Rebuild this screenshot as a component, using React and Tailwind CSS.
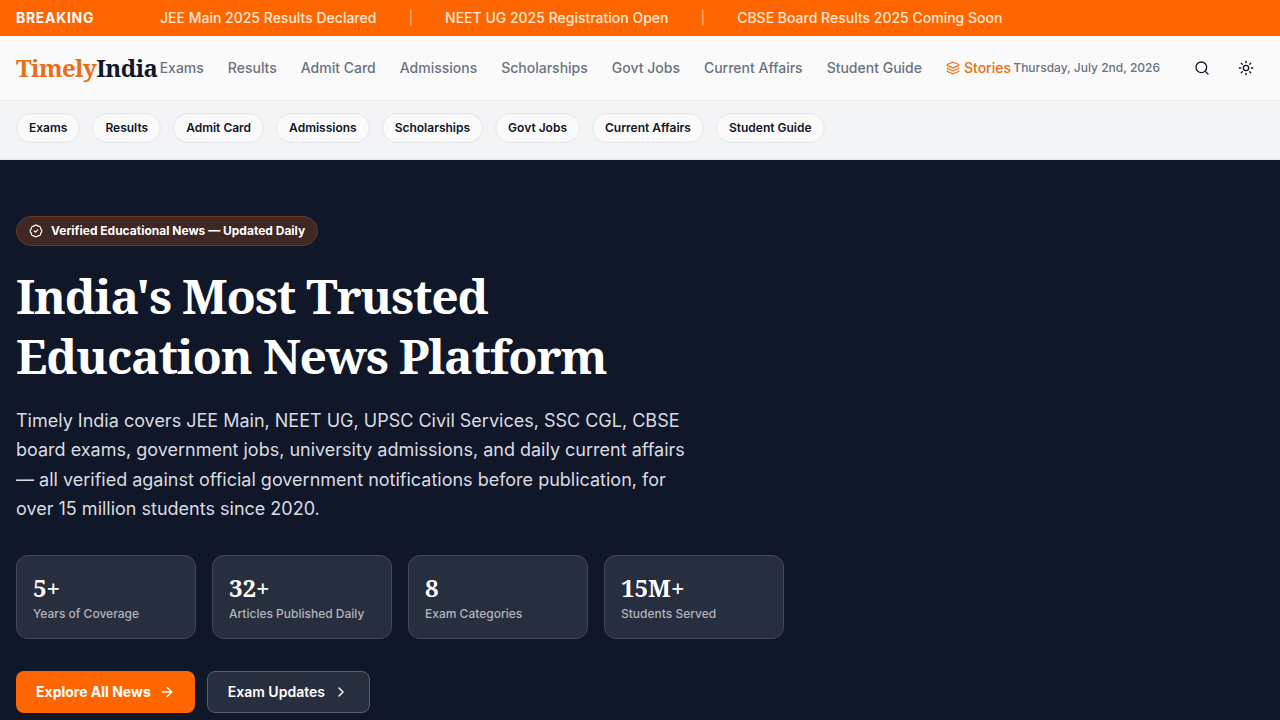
import React from 'react';
import { ArrowRight, BadgeCheck, ChevronRight, Layers, Search, Sun } from 'lucide-react';

const headlines = [
    'JEE Main 2025 Results Declared',
    'NEET UG 2025 Registration Open',
    'CBSE Board Results 2025 Coming Soon',
];

const categories = [
    'Exams',
    'Results',
    'Admit Card',
    'Admissions',
    'Scholarships',
    'Govt Jobs',
    'Current Affairs',
    'Student Guide',
];

const stats = [
    { value: '5+', label: 'Years of Coverage' },
    { value: '32+', label: 'Articles Published Daily' },
    { value: '8', label: 'Exam Categories' },
    { value: '15M+', label: 'Students Served' },
];

const slug = (name) => `#${name.toLowerCase().replace(/ /g, '-')}`;

const BreakingBar = () => (
    <div className="flex items-center bg-[#ff6600] px-4 py-2 text-sm text-white overflow-hidden whitespace-nowrap">
        <span className="w-36 shrink-0 font-bold tracking-wider">BREAKING</span>
        <div className="flex items-center gap-8 font-medium text-[#ffe8d6]">
            {headlines.map((headline, i) => (
                <React.Fragment key={headline}>
                    {i > 0 && <span className="font-normal text-[#ffb380]">|</span>}
                    <a href="#breaking">{headline}</a>
                </React.Fragment>
            ))}
        </div>
    </div>
);

const Header = () => (
    <header className="border-b border-gray-200 bg-[#fafafa]">
        <div className="flex h-16 items-center justify-between px-4 whitespace-nowrap">
            <a href="#home" className="font-['Noto_Serif',serif] text-2xl font-bold tracking-tight text-[#0f1729]">
                <span className="text-[#e86e17]">Timely</span>India
            </a>
            <nav className="flex items-center gap-6 text-sm font-medium text-gray-500">
                {categories.map((name) => (
                    <a key={name} href={slug(name)}>{name}</a>
                ))}
                <a href="#stories" className="flex items-center gap-1 text-[#e86e17]">
                    <Layers size={14} />
                    Stories
                </a>
            </nav>
            <div className="flex items-center gap-2">
                <span className="mr-4 text-xs font-medium text-gray-500">Thursday, July 2nd, 2026</span>
                <button type="button" aria-label="Search" className="flex size-9 items-center justify-center text-[#0f1729]">
                    <Search size={16} />
                </button>
                <button type="button" aria-label="Toggle theme" className="flex size-9 items-center justify-center text-[#0f1729]">
                    <Sun size={16} />
                </button>
            </div>
        </div>
    </header>
);

const CategoryPills = () => (
    <div className="flex gap-3 border-b border-gray-200 bg-gray-100 px-4 pt-3 pb-4 whitespace-nowrap">
        {categories.map((name) => (
            <a
                key={name}
                href={slug(name)}
                className="rounded-full border border-gray-200 bg-[#fafafa] px-3 py-1.5 text-xs font-semibold text-[#0f1729]"
            >
                {name}
            </a>
        ))}
    </div>
);

const StatCard = ({ value, label }) => (
    <div className="rounded-xl border border-[#434958] bg-[#272e3e] p-4">
        <div className="font-['Noto_Serif',serif] text-2xl font-bold text-white">{value}</div>
        <div className="mt-0.5 text-xs font-medium text-[#b2b5bc]">{label}</div>
    </div>
);

const Hero = () => (
    <section className="grow bg-[#0f1729] px-4 py-14">
        <div className="max-w-3xl">
            <div className="inline-flex items-center gap-2 rounded-full border border-[#6b3a21] bg-[#3f2723] px-3 py-1.5 text-xs font-bold text-white">
                <BadgeCheck size={14} />
                Verified Educational News — Updated Daily
            </div>
            <h1 className="mt-5 font-['Noto_Serif',serif] text-5xl leading-tight font-bold tracking-tight text-white">
                India's Most Trusted
                <br />
                Education News Platform
            </h1>
            <p className="mt-5 max-w-2xl text-lg leading-relaxed text-[#dbdce0]">
                Timely India covers JEE Main, NEET UG, UPSC Civil Services, SSC CGL, CBSE board exams, government
                jobs, university admissions, and daily current affairs — all verified against official government
                notifications before publication, for over 15 million students since 2020.
            </p>
            <div className="mt-8 grid grid-cols-4 gap-4">
                {stats.map((stat) => (
                    <StatCard key={stat.label} value={stat.value} label={stat.label} />
                ))}
            </div>
            <div className="mt-8 flex gap-3 text-sm text-white">
                <a href="#news" className="flex items-center gap-2 rounded-lg bg-[#ff6600] px-5 py-2.5 font-bold">
                    Explore All News
                    <ArrowRight size={16} />
                </a>
                <a href="#exams" className="flex items-center gap-2 rounded-lg border border-[#575d69] bg-[#272e3e] px-5 py-2.5 font-semibold">
                    Exam Updates
                    <ChevronRight size={16} />
                </a>
            </div>
        </div>
    </section>
);

const App = () => (
    <div className="flex min-h-screen flex-col bg-[#fafafa] font-['Inter',sans-serif]">
        <BreakingBar />
        <Header />
        <CategoryPills />
        <Hero />
    </div>
);

export default App;
